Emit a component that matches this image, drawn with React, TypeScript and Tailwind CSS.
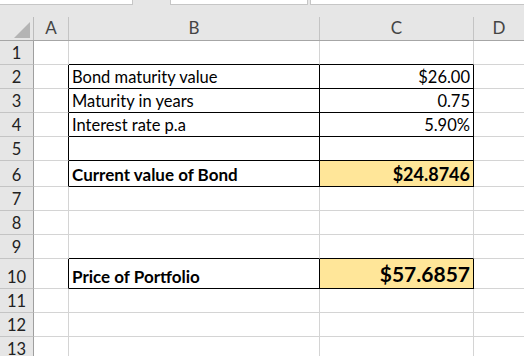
const FONT = { fontFamily: "Lato, 'Noto Sans', sans-serif" };

type Row = {
  n: number;
  h: string;
  b?: string;
  c?: string;
  boxed?: boolean;
  above?: boolean;
  bold?: boolean;
  fill?: boolean;
  big?: string;
};

const ROWS: Row[] = [
  { n: 1, h: "h-[24px]", above: true },
  { n: 2, h: "h-[24px]", b: "Bond maturity value", c: "$26.00", boxed: true },
  { n: 3, h: "h-[24px]", b: "Maturity in years", c: "0.75", boxed: true },
  { n: 4, h: "h-[24px]", b: "Interest rate p.a", c: "5.90%", boxed: true },
  { n: 5, h: "h-[24px]", boxed: true },
  { n: 6, h: "h-[26px]", b: "Current value of Bond", c: "$24.8746", boxed: true, bold: true, fill: true, big: "text-[18px] pb-[3px]" },
  { n: 7, h: "h-[24px]" },
  { n: 8, h: "h-[24px]" },
  { n: 9, h: "h-[24px]", above: true },
  { n: 10, h: "h-[30px]", b: "Price of Portfolio", c: "$57.6857", boxed: true, bold: true, fill: true, big: "text-[21px] pb-[4px]" },
  { n: 11, h: "h-[24px]" },
  { n: 12, h: "h-[24px]" },
  { n: 13, h: "h-[24px]" },
];

function SheetRow({ r }: { r: Row }) {
  const gridB = r.boxed || r.above ? "border-b-black" : "border-b-[#d4d4d4]";
  return (
    <div className={`flex ${r.h}`}>
      <div className="flex w-[34px] shrink-0 items-end justify-center border-r border-b border-r-[#9f9f9f] border-b-[#c4c4c4] bg-[#e6e6e6] pb-[3px] text-[16.5px] leading-none text-[#222]">
        {r.n}
      </div>
      <div className={`w-[35px] shrink-0 border-r border-b border-b-[#d4d4d4] ${r.boxed ? "border-r-black" : "border-r-[#d4d4d4]"}`} />
      <div className={`flex w-[251px] shrink-0 items-end border-r border-b pl-[3px] pb-[3px] leading-none text-black ${r.boxed ? "border-r-black" : "border-r-[#d4d4d4]"} ${gridB} ${r.bold ? "text-[17px] font-bold" : "text-[16.5px]"}`}>
        {r.b}
      </div>
      <div className={`flex w-[154px] shrink-0 items-end justify-end border-r border-b pr-[3px] leading-none text-black ${r.boxed ? "border-r-black" : "border-r-[#d4d4d4]"} ${gridB} ${r.fill ? "bg-[#ffe699]" : ""} ${r.big ? `font-bold ${r.big}` : "pb-[3px] text-[16.5px]"}`}>
        {r.c}
      </div>
      <div className="flex-1 border-b border-b-[#d4d4d4]" />
    </div>
  );
}

export default function App() {
  return (
    <div className="h-[356px] w-[524px] overflow-hidden bg-white" style={FONT}>
      <div className="h-[17px] bg-[#e6e6e6]">
        <div className="flex h-[5px]">
          <div className="w-[133px] border-r border-b border-[#c6c6c6] bg-white" />
          <div className="ml-[37px] w-[138px] border-x border-b border-[#c6c6c6] bg-white" />
          <div className="ml-[2px] flex-1 border-l border-b border-[#c6c6c6] bg-white" />
        </div>
      </div>
      <div className="flex h-[24px] border-b border-[#a6a6a6] bg-[#e6e6e6] text-[17px] leading-none text-[#444]">
        <div className="flex w-[34px] shrink-0 items-end justify-end border-r border-[#bcbcbc] pr-[3px] pb-[2px]">
          <svg width="16" height="16" viewBox="0 0 16 16">
            <polygon points="16,0 16,16 0,16" fill="#b4b4b4" />
          </svg>
        </div>
        <div className="flex w-[35px] shrink-0 items-end justify-center border-r border-[#c4c4c4] pb-[4px]">A</div>
        <div className="flex w-[251px] shrink-0 items-end justify-center border-r border-[#c4c4c4] pb-[4px]">B</div>
        <div className="flex w-[154px] shrink-0 items-end justify-center border-r border-[#c4c4c4] pb-[4px]">C</div>
        <div className="flex flex-1 items-end justify-center pb-[4px]">D</div>
      </div>
      {ROWS.map((r) => (
        <SheetRow key={r.n} r={r} />
      ))}
    </div>
  );
}
